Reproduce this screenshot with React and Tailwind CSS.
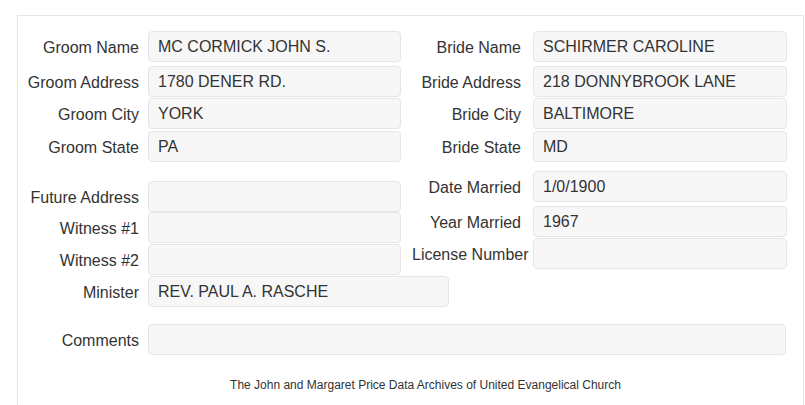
export default function App() {
  const font = { fontFamily: '"Liberation Sans", Arial, sans-serif' };
  const L = ({ label, value, w = "w-[253px]", mt = "mt-0" }) => (
    <div className={`flex ${mt}`}>
      <div className="shrink-0 w-[121px] h-[31px] pt-[8px] text-right whitespace-nowrap text-[16px] leading-[18px] text-[#333]">{label}</div>
      <div className={`shrink-0 ml-[9px] ${w} h-[31px] rounded-[4px] border border-[#e6e6e6] bg-[#f7f7f7] pl-[9px] flex items-center text-[16px] text-[#333]`}>{value}</div>
    </div>
  );
  const R = ({ label, value, mt = "mt-0" }) => (
    <div className={`flex ${mt}`}>
      <div className="shrink-0 ml-[11px] w-[109px] h-[31px] pt-[8px] text-right whitespace-nowrap text-[16px] leading-[18px] text-[#333]">{label}</div>
      <div className="shrink-0 ml-[12px] w-[254px] h-[31px] rounded-[4px] border border-[#e6e6e6] bg-[#f7f7f7] pl-[9px] flex items-center text-[16px] text-[#333]">{value}</div>
    </div>
  );
  return (
    <div className="w-[805px] h-[405px] bg-white overflow-hidden" style={font}>
      <div className="ml-[17px] mt-[15px] w-[787px] h-[400px] border border-b-0 border-[#e5e5e5] pt-[15px]">
        <div className="flex">
          <div className="w-[383px] shrink-0 flex flex-col">
            <L label="Groom Name" value="MC CORMICK JOHN S." />
            <L label="Groom Address" value="1780 DENER RD." mt="mt-[4px]" />
            <L label="Groom City" value="YORK" mt="mt-[1px]" />
            <L label="Groom State" value="PA" mt="mt-[2px]" />
            <L label="Future Address" value="" mt="mt-[19px]" />
            <L label="Witness #1" value="" mt="mt-0" />
            <L label="Witness #2" value="" mt="mt-[1px]" />
            <L label="Minister" value="REV. PAUL A. RASCHE" w="w-[301px]" mt="mt-[1px]" />
          </div>
          <div className="flex flex-col">
            <R label="Bride Name" value="SCHIRMER CAROLINE" />
            <R label="Bride Address" value="218 DONNYBROOK LANE" mt="mt-[4px]" />
            <R label="Bride City" value="BALTIMORE" mt="mt-[1px]" />
            <R label="Bride State" value="MD" mt="mt-[2px]" />
            <R label="Date Married" value="1/0/1900" mt="mt-[9px]" />
            <R label="Year Married" value="1967" mt="mt-[4px]" />
            <R label="License Number" value="" mt="mt-[1px]" />
          </div>
        </div>
        <L label="Comments" value="" w="w-[638px]" mt="mt-[17px]" />
        <div className="mt-[23px] pl-[30px] text-center text-[12px] leading-[14px] text-[#333]">
          The John and Margaret Price Data Archives of United Evangelical Church
        </div>
      </div>
    </div>
  );
}
